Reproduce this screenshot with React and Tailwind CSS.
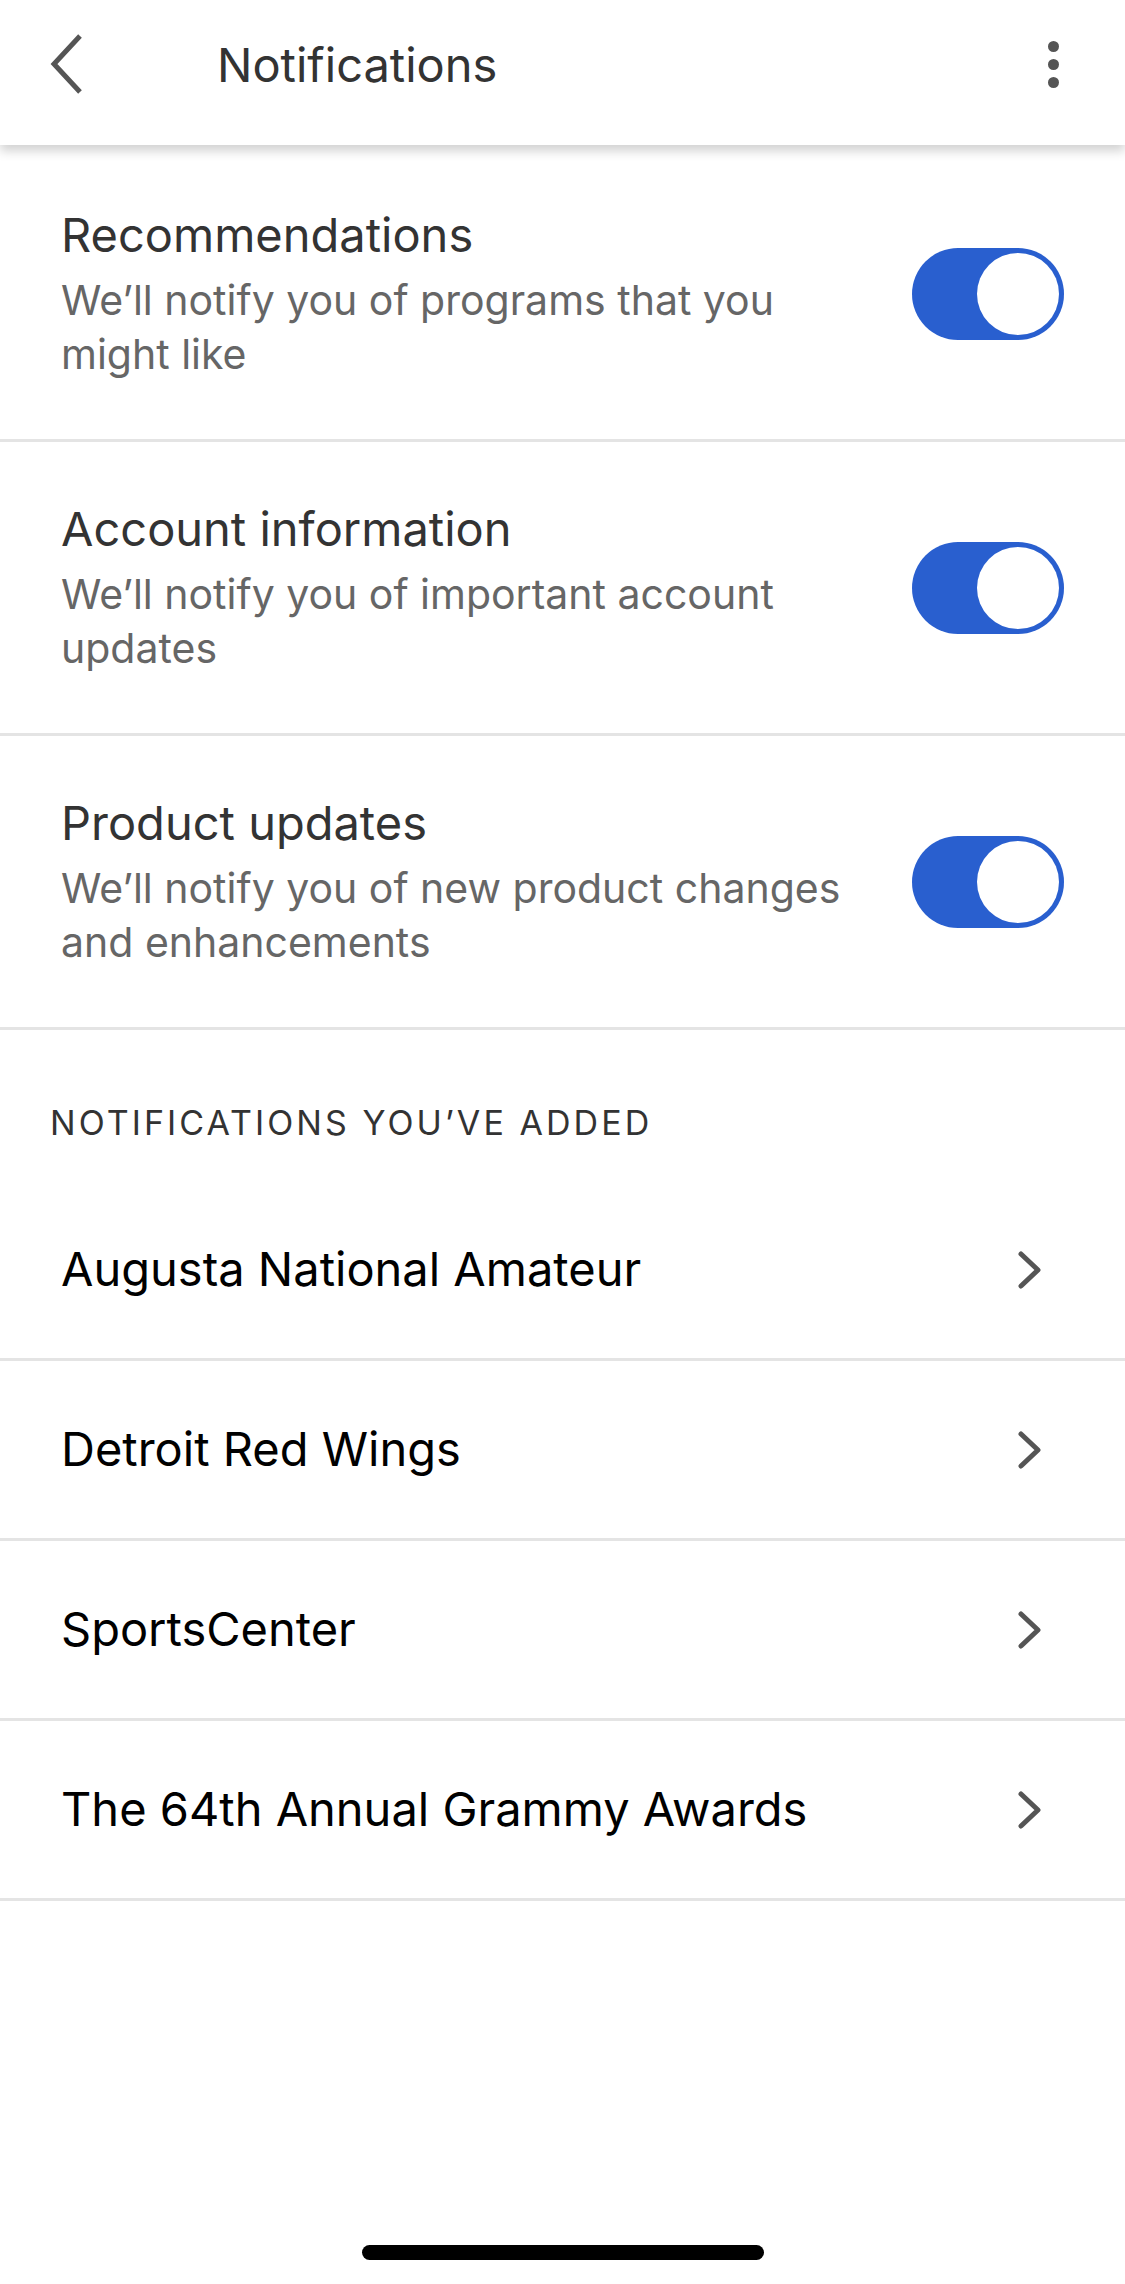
import React from 'react';

const settings = [
  { title: 'Recommendations', desc: 'We\u2019ll notify you of programs that you might like' },
  { title: 'Account information', desc: 'We\u2019ll notify you of important account updates' },
  { title: 'Product updates', desc: 'We\u2019ll notify you of new product changes and enhancements' },
];

const added = [
  'Augusta National Amateur',
  'Detroit Red Wings',
  'SportsCenter',
  'The 64th Annual Grammy Awards',
];

function Toggle() {
  return (
    <div className="w-[152px] h-[92px] rounded-full bg-[#295fcf] flex items-center justify-end pr-[5px] shrink-0">
      <div className="w-[82px] h-[82px] rounded-full bg-white" />
    </div>
  );
}

function ChevronRight() {
  return (
    <svg width="24" height="38" viewBox="0 0 24 38" fill="none" className="shrink-0">
      <path d="M3 3 L20 19 L3 35" stroke="#555555" strokeWidth="5" strokeLinecap="round" strokeLinejoin="round" />
    </svg>
  );
}

export default function App() {
  return (
    <div className="w-[1125px] h-[2284px] bg-white relative overflow-hidden font-['Inter',sans-serif]">
      {/* Header */}
      <div className="h-[145px] bg-white relative z-10 shadow-[0_6px_10px_rgba(0,0,0,0.18)]">
        <div className="h-[128px] flex items-center pl-[47px] pr-[66px]">
          <svg width="38" height="62" viewBox="0 0 38 62" fill="none" className="shrink-0">
            <path d="M33 3 L7 31 L33 59" stroke="#555555" strokeWidth="5" strokeLinejoin="miter" />
          </svg>
          <div className="ml-[132px] text-[47px] text-[#333333] leading-none flex-1">Notifications</div>
          <div className="flex flex-col items-center gap-[7px]">
            <div className="w-[11px] h-[11px] rounded-full bg-[#555555]" />
            <div className="w-[11px] h-[11px] rounded-full bg-[#555555]" />
            <div className="w-[11px] h-[11px] rounded-full bg-[#555555]" />
          </div>
        </div>
      </div>

      {/* Toggle settings */}
      <div className="pt-[3px]">
        {settings.map((s) => (
          <div key={s.title} className="h-[294px] border-b-[3px] border-[#e4e4e4] flex items-center pl-[61px] pr-[61px]">
            <div className="flex-1">
              <div className="text-[47px] leading-[56px] text-[#333333]">{s.title}</div>
              <div className="mt-[10px] w-[800px] text-[41px] leading-[54px] text-[#666666]">{s.desc}</div>
            </div>
            <Toggle />
          </div>
        ))}
      </div>

      {/* Added notifications */}
      <div className="pt-[72px] pb-[38px] pl-[50px] text-[34px] leading-[41px] tracking-[0.09em] text-[#333333]">
        NOTIFICATIONS YOU&rsquo;VE ADDED
      </div>
      {added.map((name) => (
        <div key={name} className="h-[180px] border-b-[3px] border-[#e4e4e4] flex items-center pl-[61px] pr-[83px]">
          <div className="flex-1 text-[47px] text-black">{name}</div>
          <ChevronRight />
        </div>
      ))}

      {/* Home indicator */}
      <div className="absolute left-[362px] top-[2245px] w-[402px] h-[15px] rounded-full bg-black" />
    </div>
  );
}
